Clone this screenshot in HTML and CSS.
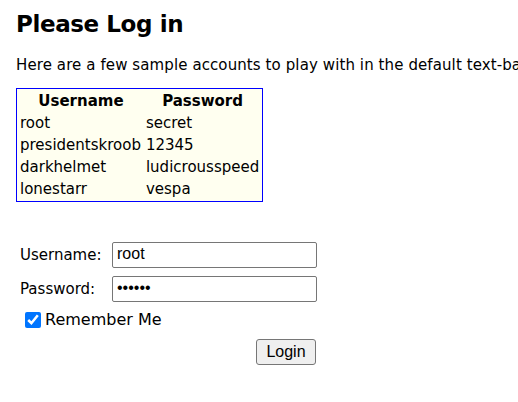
FILE: index.html
```html
<!DOCTYPE html>
<html>
<head>
<meta charset="utf-8">
<title>Please Log in</title>
<link rel="stylesheet" href="styles.css">
</head>
<body>
<h1 class="title">Please Log in</h1>
<p class="intro">Here are a few sample accounts to play with in the default text-based login</p>
<table class="accounts">
  <tr><th>Username</th><th>Password</th></tr>
  <tr><td>root</td><td>secret</td></tr>
  <tr><td>presidentskroob</td><td>12345</td></tr>
  <tr><td>darkhelmet</td><td>ludicrousspeed</td></tr>
  <tr><td>lonestarr</td><td>vespa</td></tr>
</table>
<form class="login">
  <label class="lbl" for="u">Username:</label>
  <input class="field" id="u" type="text" value="root">
  <label class="lbl" for="p">Password:</label>
  <input class="field" id="p" type="password" value="secret">
  <label class="remember"><input class="check" type="checkbox" checked>Remember Me</label>
  <div class="actions"><button class="btn" type="button">Login</button></div>
</form>
</body>
</html>
```
FILE: styles.css
```css
html { overflow: hidden; }
body {
  margin: 0;
  padding: 0 16px;
  font-family: "DejaVu Sans", Verdana, sans-serif;
  font-size: 15px;
  color: #000;
  background: #fff;
}
.title {
  margin: 10px 0 0;
  font-size: 23px;
  line-height: 28px;
  font-weight: bold;
  letter-spacing: -0.4px;
}
.intro {
  margin: 18px 0 0;
  white-space: nowrap;
  line-height: 18px;
  letter-spacing: 0.1px;
}
.accounts {
  margin-top: 14px;
  border: 1px solid #0000ff;
  background: #fffff0;
  border-collapse: separate;
  border-spacing: 0;
  padding: 1px;
}
.accounts th, .accounts td {
  padding: 0 2px 0 2px;
  height: 22px;
  text-align: left;
  white-space: nowrap;
}
.accounts th { text-align: center; font-weight: bold; }
.accounts td:first-child { padding-right: 3px; }
.login {
  display: grid;
  grid-template-columns: 91px 206px;
  column-gap: 0;
  row-gap: 8px;
  margin-top: 40px;
  padding-left: 4px;
  align-items: center;
}
.lbl { font-size: 15px; }
.field {
  box-sizing: border-box;
  height: 26px;
  width: 205px;
  margin: 0 0 0 1px;
  border: 1px solid #767676;
  border-radius: 2px;
  padding: 0 4px 2px;
  font-family: "Liberation Sans", Arial, sans-serif;
  font-size: 16px;
}
.remember {
  grid-column: 1 / 3;
  display: flex;
  align-items: center;
  font-size: 16px;
  padding-left: 5px;
  margin-top: 0;
}
.check {
  width: 16px;
  height: 16px;
  margin: 0 4px 0 0;
  accent-color: #0075ff;
}
.actions {
  grid-column: 1 / 3;
  display: flex;
  justify-content: flex-end;
  margin-top: 2px;
  padding-right: 1px;
}
.btn {
  box-sizing: border-box;
  height: 26px;
  width: 60px;
  font-family: "Liberation Sans", Arial, sans-serif;
  font-size: 16px;
  border: 1px solid #767676;
  border-radius: 3px;
  background: #efefef;
  padding: 0;
}
```
